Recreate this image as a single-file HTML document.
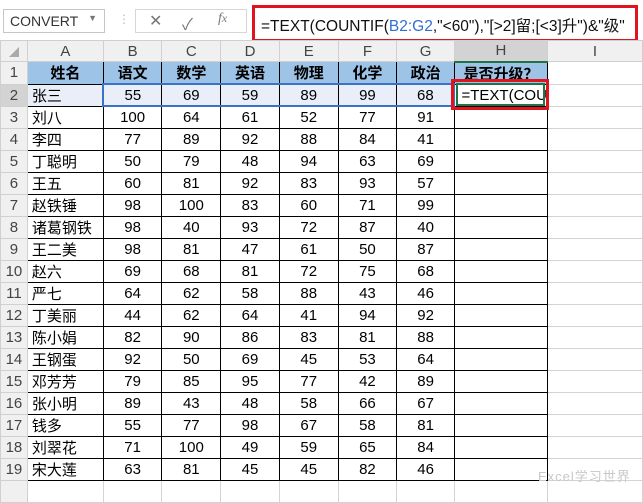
<!DOCTYPE html>
<html><head><meta charset="utf-8"><style>
*{margin:0;padding:0;box-sizing:border-box}
body{width:643px;height:491px;background:#fff;position:relative;overflow:hidden;font-family:"Liberation Sans","Noto Sans CJK SC",sans-serif}
.top{position:absolute;left:0;top:0;width:643px;height:40px;background:#fff}
.nb{position:absolute;left:3px;top:9px;width:102px;height:24px;border:1px solid #c6c6c6;font-size:14px;color:#333;padding:3px 0 0 6px}
.nb span{position:absolute;right:7px;top:3px;font-size:9px;color:#777}
.btns{position:absolute;left:135px;top:9px;width:112px;height:24px;border:1px solid #d6d6d6;color:#777;font-size:16px}
.fx{position:absolute;left:252px;top:5px;width:386px;height:37px;border:3px solid #e0141e;font-size:15.5px;padding:6px 0 0 6px;white-space:nowrap;color:#111}
table{position:absolute;left:0;top:40px;border-collapse:collapse;table-layout:fixed}
td{height:22px;font-size:15px;text-align:center;padding:0;border:1px solid #d4d4d4;white-space:nowrap;overflow:hidden}
tr.h td{height:21px;background:#f0f0f0;color:#444;font-size:15px;border-color:#d0d0d0}
td.r{background:#f0f0f0;color:#444;border-color:#d0d0d0}
td.t{border:1px solid #000}
tr.hd td.t{background:#9dc3e6;font-weight:bold}
td.l{text-align:left;padding-left:4px}
tr.s td.t{background:#e9eef8}
</style></head><body>
<div class="top">
<div class="nb">CONVERT<span>▼</span></div>
<div style="position:absolute;left:118px;top:12px;color:#bbb;font-size:12px">⋮</div>
<div class="btns"><span style="position:absolute;left:13px;top:1px">✕</span><span style="position:absolute;left:46px;top:1px">✓</span><span style="position:absolute;left:82px;top:1px;font-style:italic;font-family:'Liberation Serif',serif;font-size:14px">f<small>x</small></span></div>
<div class="fx">=TEXT(COUNTIF(<span style="color:#2f6fd0">B2:G2</span>,"&lt;60"),"[&gt;2]留;[&lt;3]升")&amp;"级"</div>
</div>
<table>
<colgroup><col style="width:27px"><col style="width:76px"><col style="width:59px"><col style="width:59px"><col style="width:59px"><col style="width:59px"><col style="width:59px"><col style="width:58px"><col style="width:91px"><col style="width:96px"></colgroup>
<tr class="h"><td style="font-size:10px;color:#aaa">◢</td><td>A</td><td>B</td><td>C</td><td>D</td><td>E</td><td>F</td><td>G</td><td style="background:#d3d3d3;border-bottom:2px solid #217346">H</td><td>I</td></tr>
<tr class="hd"><td class="r">1</td><td class="t">姓名</td><td class="t">语文</td><td class="t">数学</td><td class="t">英语</td><td class="t">物理</td><td class="t">化学</td><td class="t">政治</td><td class="t">是否升级？</td><td></td></tr>
<tr class="s"><td class="r" style="background:#d3d3d3">2</td><td class="t l">张三</td><td class="t" style="border-left:2px solid #3a72c8;border-top:2px solid #3a72c8;border-bottom:2px solid #3a72c8">55</td><td class="t" style="border-top:2px solid #3a72c8;border-bottom:2px solid #3a72c8">69</td><td class="t" style="border-top:2px solid #3a72c8;border-bottom:2px solid #3a72c8">59</td><td class="t" style="border-top:2px solid #3a72c8;border-bottom:2px solid #3a72c8">89</td><td class="t" style="border-top:2px solid #3a72c8;border-bottom:2px solid #3a72c8">99</td><td class="t" style="border-top:2px solid #3a72c8;border-bottom:2px solid #3a72c8;border-right:2px solid #3a72c8">68</td><td class="t l" style="background:#fff;padding-left:6px">=TEXT(COU</td><td></td></tr>
<tr><td class="r">3</td><td class="t l">刘八</td><td class="t">100</td><td class="t">64</td><td class="t">61</td><td class="t">52</td><td class="t">77</td><td class="t">91</td><td class="t"></td><td></td></tr>
<tr><td class="r">4</td><td class="t l">李四</td><td class="t">77</td><td class="t">89</td><td class="t">92</td><td class="t">88</td><td class="t">84</td><td class="t">41</td><td class="t"></td><td></td></tr>
<tr><td class="r">5</td><td class="t l">丁聪明</td><td class="t">50</td><td class="t">79</td><td class="t">48</td><td class="t">94</td><td class="t">63</td><td class="t">69</td><td class="t"></td><td></td></tr>
<tr><td class="r">6</td><td class="t l">王五</td><td class="t">60</td><td class="t">81</td><td class="t">92</td><td class="t">83</td><td class="t">93</td><td class="t">57</td><td class="t"></td><td></td></tr>
<tr><td class="r">7</td><td class="t l">赵铁锤</td><td class="t">98</td><td class="t">100</td><td class="t">83</td><td class="t">60</td><td class="t">71</td><td class="t">99</td><td class="t"></td><td></td></tr>
<tr><td class="r">8</td><td class="t l">诸葛钢铁</td><td class="t">98</td><td class="t">40</td><td class="t">93</td><td class="t">72</td><td class="t">87</td><td class="t">40</td><td class="t"></td><td></td></tr>
<tr><td class="r">9</td><td class="t l">王二美</td><td class="t">98</td><td class="t">81</td><td class="t">47</td><td class="t">61</td><td class="t">50</td><td class="t">87</td><td class="t"></td><td></td></tr>
<tr><td class="r">10</td><td class="t l">赵六</td><td class="t">69</td><td class="t">68</td><td class="t">81</td><td class="t">72</td><td class="t">75</td><td class="t">68</td><td class="t"></td><td></td></tr>
<tr><td class="r">11</td><td class="t l">严七</td><td class="t">64</td><td class="t">62</td><td class="t">58</td><td class="t">88</td><td class="t">43</td><td class="t">46</td><td class="t"></td><td></td></tr>
<tr><td class="r">12</td><td class="t l">丁美丽</td><td class="t">44</td><td class="t">62</td><td class="t">64</td><td class="t">41</td><td class="t">94</td><td class="t">92</td><td class="t"></td><td></td></tr>
<tr><td class="r">13</td><td class="t l">陈小娟</td><td class="t">82</td><td class="t">90</td><td class="t">86</td><td class="t">83</td><td class="t">81</td><td class="t">88</td><td class="t"></td><td></td></tr>
<tr><td class="r">14</td><td class="t l">王钢蛋</td><td class="t">92</td><td class="t">50</td><td class="t">69</td><td class="t">45</td><td class="t">53</td><td class="t">64</td><td class="t"></td><td></td></tr>
<tr><td class="r">15</td><td class="t l">邓芳芳</td><td class="t">79</td><td class="t">85</td><td class="t">95</td><td class="t">77</td><td class="t">42</td><td class="t">89</td><td class="t"></td><td></td></tr>
<tr><td class="r">16</td><td class="t l">张小明</td><td class="t">89</td><td class="t">43</td><td class="t">48</td><td class="t">58</td><td class="t">66</td><td class="t">67</td><td class="t"></td><td></td></tr>
<tr><td class="r">17</td><td class="t l">钱多</td><td class="t">55</td><td class="t">77</td><td class="t">98</td><td class="t">67</td><td class="t">58</td><td class="t">81</td><td class="t"></td><td></td></tr>
<tr><td class="r">18</td><td class="t l">刘翠花</td><td class="t">71</td><td class="t">100</td><td class="t">49</td><td class="t">59</td><td class="t">65</td><td class="t">84</td><td class="t"></td><td></td></tr>
<tr><td class="r">19</td><td class="t l">宋大莲</td><td class="t">63</td><td class="t">81</td><td class="t">45</td><td class="t">45</td><td class="t">82</td><td class="t">46</td><td class="t"></td><td></td></tr>
<tr><td class="r"></td><td></td><td></td><td></td><td></td><td></td><td></td><td></td><td></td><td></td></tr>
</table>
<div style="position:absolute;left:451px;top:79px;width:98px;height:31px;border:3px solid #e0141e"></div>
<div style="position:absolute;left:456px;top:83px;width:89px;height:23px;border:2px solid #217346"></div>
<div style="position:absolute;left:538px;top:466px;font-size:13px;color:#c8c8c8;letter-spacing:1px">Excel学习世界</div>
</body></html>
